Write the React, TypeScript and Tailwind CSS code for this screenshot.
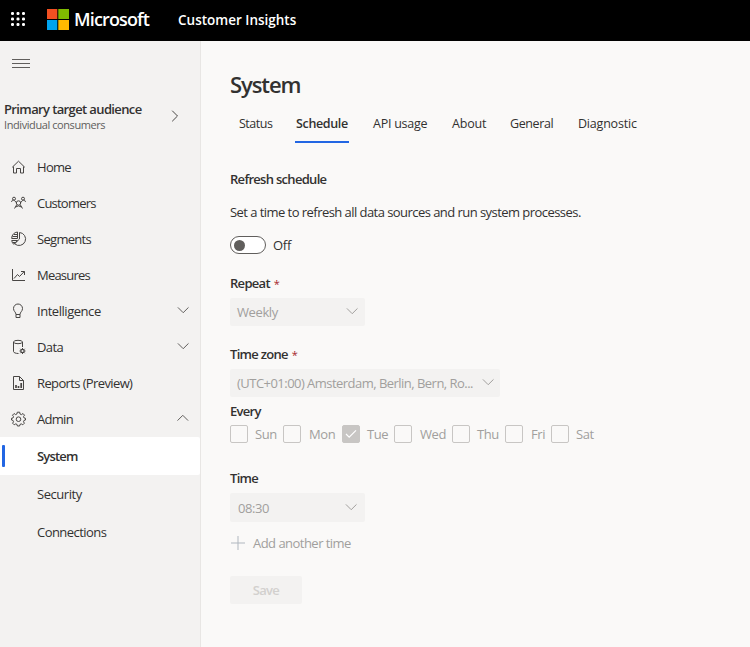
import React from "react";

type IconProps = { d: string; className?: string; children?: React.ReactNode };

function Icon({ d, className = "", children }: IconProps) {
  return (
    <svg
      width="16"
      height="16"
      viewBox="0 0 16 16"
      fill="none"
      stroke="currentColor"
      strokeWidth="1"
      className={`shrink-0 ${className}`}
    >
      <path d={d} />
      {children}
    </svg>
  );
}

const homeIcon = <Icon d="M1.200 8.300 7.500 2.200 13.800 8.300M2.500 7.500V14H5.500V9.500H9.500V14H12.500V7.500" />;

const customersIcon = (
  <Icon d="M3.300 5.300 5.700 8M11.700 5.300 9.300 8M3.500 13.500 5.700 9.800M11.500 13.500 9.300 9.800M.6 7C.6 5.700 1.500 5 2.700 5M14.400 7C14.400 5.700 13.500 5 12.300 5">
    <circle cx="3" cy="3.700" r="1.500" />
    <circle cx="12" cy="3.700" r="1.500" />
    <circle cx="7.500" cy="8" r="2.200" />
    <path d="M4.500 12Q7.500 9.800 10.500 12" />
  </Icon>
);

const segmentsIcon = (
  <Icon d="M8.500 1.500A6.500 6.500 0 1 1 3.700 12.800L8.500 8Z">
    <path d="M6.500 1V7.500H.7A6.300 6.300 0 0 1 6.500 1ZM.7 9.500H6.500L2.600 13.200A6.500 6.500 0 0 1 .7 9.500M1.500 5.500H6.500M3 3.500H6.500M1.500 11.500H4.500" />
  </Icon>
);

const measuresIcon = (
  <Icon d="M1.500 2V13.500H14M3 11.500 6.500 7.500 8.500 9.500 13.300 4.500M10 4.500H13.500V8" />
);

const bulbIcon = (
  <Icon d="M5 11.500C5 9 2.500 8.500 2.500 5.500A4.500 4.500 0 0 1 11.500 5.500C11.500 8.500 9 9 9 11.500ZM5 11.500V14.500H9V11.500" />
);

const dataIcon = (
  <Icon d="M2.500 3V12.500C2.500 13.500 4.500 14.500 7.500 14.500M11.500 3V8">
    <ellipse cx="7" cy="3" rx="4.500" ry="1.700" />
    <circle cx="11.500" cy="12" r="1.700" strokeWidth="1.300" />
    <path d="M11.500 9V10M11.500 14V15M8.500 12H9.500M13.500 12H14.500M9.300 9.800 10.200 10.700M12.800 13.300 13.700 14.200M13.700 9.800 12.800 10.700M10.200 13.300 9.300 14.200" />
  </Icon>
);

const reportsIcon = (
  <Icon d="M2.500 1.500H8.500L12.500 5.500V14.500H2.500ZM8.500 1.500V5.500H12.500">
    <path d="M5 10V13M7.500 11V13M10.200 8V13" strokeWidth="1.700" />
  </Icon>
);

const gearIcon = (
  <Icon d="M6.300 1.200H8.700L9 3 10.500 3.600 12 2.500 13.500 4.200 12.500 5.600 13.100 7 14.500 7.300V9L13 9.400 12.500 10.800 13.400 12.200 11.800 13.800 10.300 12.900 9 13.400 8.600 15H6.400L6 13.400 4.700 12.900 3.200 13.800 1.600 12.200 2.500 10.800 2 9.400.5 9V7.300L2 7 2.500 5.600 1.500 4.200 3.100 2.500 4.600 3.600 5.900 3Z">
    <circle cx="7.500" cy="8.200" r="2.300" />
  </Icon>
);

function Chevron({ className = "" }: { className?: string }) {
  return (
    <svg width="12" height="8" viewBox="0 0 12 8" fill="none" stroke="currentColor" className={`shrink-0 ${className}`}>
      <path d="M.9 1.400 6.200 6.700 11.500 1.400" />
    </svg>
  );
}

type NavItem = { label: string; icon: React.ReactNode; spacing: string; expand?: "down" | "up" };

const nav: NavItem[] = [
  { label: "Home", icon: homeIcon, spacing: "tracking-[-0.7px]" },
  { label: "Customers", icon: customersIcon, spacing: "tracking-[-0.78px]" },
  { label: "Segments", icon: segmentsIcon, spacing: "tracking-[-0.7px]" },
  { label: "Measures", icon: measuresIcon, spacing: "tracking-[-0.8px]" },
  { label: "Intelligence", icon: bulbIcon, spacing: "tracking-[-0.46px]", expand: "down" },
  { label: "Data", icon: dataIcon, spacing: "tracking-[-0.6px]", expand: "down" },
  { label: "Reports (Preview)", icon: reportsIcon, spacing: "tracking-[-0.62px]" },
  { label: "Admin", icon: gearIcon, spacing: "tracking-[-0.7px]", expand: "up" },
];

const tabs = [
  { label: "Status", box: "w-[57px] tracking-[-0.5px]" },
  { label: "Schedule", box: "w-[77px] tracking-[-0.35px]", active: true },
  { label: "API usage", box: "w-[79px] tracking-[-0.25px]" },
  { label: "About", box: "w-[58px] tracking-[-0.2px]" },
  { label: "General", box: "w-[68px] tracking-[-0.4px]" },
  { label: "Diagnostic", box: "w-[70px] tracking-[-0.2px]" },
];

const days = [
  { label: "Sun", box: "w-[53px]", gap: "pl-[7px]" },
  { label: "Mon", box: "w-[59px]", gap: "pl-[8px]" },
  { label: "Tue", box: "w-[52px]", gap: "pl-[7px]", checked: true },
  { label: "Wed", box: "w-[58px]", gap: "pl-[8px]" },
  { label: "Thu", box: "w-[53px]", gap: "pl-[7px]" },
  { label: "Fri", box: "w-[46px]", gap: "pl-[8px]" },
  { label: "Sat", box: "w-[50px]", gap: "pl-[7px]" },
];

function Header() {
  return (
    <header className="flex h-[41px] shrink-0 items-center bg-black text-white">
      <svg width="14" height="14" viewBox="0 0 14 14" fill="currentColor" className="ml-[11px] -mt-[4px] shrink-0">
        {[0, 5.500, 11].map((y) =>
          [0, 5.500, 11].map((x) => <rect key={`${x}-${y}`} x={x} y={y} width="3" height="3" rx="1.200" />)
        )}
      </svg>
      <svg width="22" height="21" viewBox="0 0 22 21" className="ml-[22px] -mt-[2px] shrink-0">
        <path fill="#f25022" d="M0 0h10.300v10H0z" />
        <path fill="#7fba00" d="M11.300 0H22v10H11.300z" />
        <path fill="#00a4ef" d="M0 11h10.300v10H0z" />
        <path fill="#ffb900" d="M11.300 11H22v10H11.300z" />
      </svg>
      <span className="-mt-[3px] ml-[5px] w-[104px] text-[18px] leading-[24px] font-semibold tracking-[-0.85px]">Microsoft</span>
      <span className="-mt-px text-[13.500px] leading-[20px] font-semibold">Customer Insights</span>
    </header>
  );
}

function Sidebar() {
  return (
    <aside className="flex w-[201px] shrink-0 flex-col border-r border-[#e8e6e4] bg-[#f3f2f1]">
      <svg width="18" height="10" viewBox="0 0 18 10" stroke="#605e5c" className="mt-[18px] ml-[12px] shrink-0">
        <path d="M0 .5H18M0 4.500H18M0 8.500H18" />
      </svg>
      <div className="mt-[31px] flex h-[32px] items-center justify-between pr-[21px] pl-[4px]">
        <div className="flex flex-col pt-px">
          <span className="text-[13px] leading-[17px] font-semibold tracking-[-0.62px]">Primary target audience</span>
          <span className="-mt-px text-[11px] leading-[15px] tracking-[-0.42px] text-[#605e5c]">Individual consumers</span>
        </div>
        <svg width="8" height="12" viewBox="0 0 8 12" fill="none" stroke="#484644">
          <path d="M1.200.7 6.500 6 1.200 11.300" />
        </svg>
      </div>
      <nav className="mt-[17px] flex flex-col">
        {nav.map((n) => (
          <div key={n.label} className="flex h-[36px] items-center pr-[11px] pl-[11px]">
            <span className="text-[#484644]">{n.icon}</span>
            <span className={`ml-[10px] flex-1 text-[13px] leading-[20px] ${n.spacing}`}>{n.label}</span>
            {n.expand && (
              <Chevron className={n.expand === "up" ? "-mt-[2px] rotate-180 text-[#605e5c]" : "-mt-[2px] text-[#605e5c]"} />
            )}
          </div>
        ))}
        <div className="flex h-[38px] items-center rounded-r-[2px] bg-white pl-[2px]">
          <span className="h-[22px] w-[3px] rounded-[1px] bg-[#2266e3]" />
          <span className="ml-[32px] text-[13px] leading-[20px] font-semibold tracking-[-0.8px]">System</span>
        </div>
        <div className="flex h-[38px] items-center pt-[2px] pl-[37px] text-[13px] tracking-[-0.45px]">Security</div>
        <div className="flex h-[38px] items-center pt-[2px] pl-[37px] text-[13px] tracking-[-0.54px]">Connections</div>
      </nav>
    </aside>
  );
}

function Label({ children, required, className = "" }: { children: string; required?: boolean; className?: string }) {
  return (
    <div className={`h-[20px] text-[13px] leading-[20px] font-semibold tracking-[-0.7px] ${className}`}>
      {children}
      {required && <span className="ml-[4px] text-[11px] font-normal text-[#a4262c]">*</span>}
    </div>
  );
}

function Select({ value, className }: { value: string; className: string }) {
  return (
    <div className={`flex items-center justify-between rounded-[2px] bg-[#f3f2f1] text-[13px] text-[#a19f9d] ${className}`}>
      <span className="leading-[20px] whitespace-nowrap">{value}</span>
      <Chevron className="-mt-[2px]" />
    </div>
  );
}

export default function App() {
  return (
    <div className="flex h-[647px] w-[750px] flex-col overflow-hidden bg-[#faf9f8] font-['Open_Sans','Noto_Sans',sans-serif] text-[#323130] font-stretch-[95%]">
      <Header />
      <div className="flex flex-1">
        <Sidebar />
        <main className="flex flex-1 flex-col items-start pt-[28px] pl-[29px] whitespace-nowrap">
          <h1 className="h-[30px] text-[22px] leading-[30px] font-semibold tracking-[-1.1px]">System</h1>
          <div className="mt-[5px] flex h-[39px] pl-[9px] text-[12.500px]">
            {tabs.map((t) => (
              <div key={t.label} className={`${t.box} flex flex-col items-start`}>
                <span className={`h-[37px] pt-[10px] leading-[20px] ${t.active ? "font-semibold" : ""}`}>{t.label}</span>
                {t.active && <span className="-ml-px h-[2px] w-[54px] bg-[#2266e3]" />}
              </div>
            ))}
          </div>
          <Label className="mt-[26px]">Refresh schedule</Label>
          <p className="mt-[13px] text-[13px] leading-[20px] tracking-[-0.55px]">
            Set a time to refresh all data sources and run system processes.
          </p>
          <div className="mt-[14px] flex h-[18px] items-center">
            <span className="flex h-[18px] w-[36px] items-center rounded-full border border-[#605e5c] bg-white pl-[3px]">
              <span className="h-[11px] w-[11px] rounded-full bg-[#605e5c]" />
            </span>
            <span className="ml-[7px] text-[13px] leading-[18px] tracking-[-0.3px]">Off</span>
          </div>
          <Label className="mt-[19px]" required>Repeat</Label>
          <Select value="Weekly" className="mt-[5px] h-[28px] w-[135px] px-[7px] tracking-[-0.4px]" />
          <Label className="mt-[18px]" required>Time zone</Label>
          <Select
            value="(UTC+01:00) Amsterdam, Berlin, Bern, Ro..."
            className="mt-[5px] h-[28px] w-[270px] pr-[6px] pl-[7px] tracking-[-0.53px]"
          />
          <Label className="mt-[4px]">Every</Label>
          <div className="mt-[4px] flex h-[18px]">
            {days.map((d) => (
              <div key={d.label} className={`${d.box} flex items-center`}>
                <span
                  className={`flex h-[18px] w-[18px] shrink-0 items-center justify-center rounded-[2px] border border-[#c8c6c4] ${d.checked ? "bg-[#c8c6c4]" : ""}`}
                >
                  {d.checked && (
                    <svg width="12" height="10" viewBox="0 0 12 10" fill="none" stroke="white" strokeWidth="1.200">
                      <path d="M1 5 4.200 8.200 11 1.400" />
                    </svg>
                  )}
                </span>
                <span className={`${d.gap} text-[13px] leading-[18px] tracking-[-0.4px] text-[#a19f9d]`}>{d.label}</span>
              </div>
            ))}
          </div>
          <Label className="mt-[25px]">Time</Label>
          <Select value="08:30" className="mt-[5px] h-[29px] w-[135px] pr-[8px] pl-[8px] tracking-[-0.4px]" />
          <div className="mt-[11px] flex h-[20px] items-center text-[13px] text-[#a19f9d]">
            <svg width="16" height="16" viewBox="0 0 16 16" stroke="#b0b7bf">
              <path d="M1 8H15M8 1V15" />
            </svg>
            <span className="ml-[7px] leading-[20px] tracking-[-0.53px]">Add another time</span>
          </div>
          <button className="mt-[23px] h-[28px] w-[72px] rounded-[2px] bg-[#f3f2f1] pt-px text-[13px] font-semibold tracking-[-0.7px] text-[#d2d0ce]">
            Save
          </button>
        </main>
      </div>
    </div>
  );
}
